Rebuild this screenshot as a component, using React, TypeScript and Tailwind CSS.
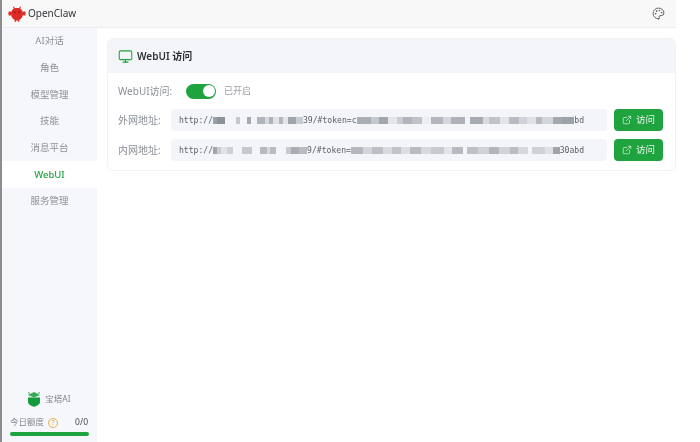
import { ExternalLink, Monitor, Palette } from 'lucide-react';

const menu = ['AI对话', '角色', '模型管理', '技能', '消息平台', 'WebUI', '服务管理'];

// pixelated parts of the addresses: [width, colour]
const mosaicA: [number, string][] = [
  [3, '#9aa0a8'], [6, '#8c929a'], [8, '#f3f5f9'], [3, '#c4c8ce'], [5, '#f3f5f9'], [3, '#a5a9b0'], [5, '#f3f5f9'], [6, '#b0b4bb'],
  [3, '#d5d8dd'], [3, '#aeb2b8'], [4, '#dfe2e6'], [3, '#b4b8be'], [4, '#e4e6ea'], [6, '#a0a4ab'], [5, '#c8cbd1'],
];
const mosaicB: [number, string][] = [
  [10, '#a9adb4'], [5, '#c5c8ce'], [6, '#a2a6ad'], [6, '#e3e5e9'], [4, '#c9ccd2'], [6, '#b1b5bb'], [7, '#bfc2c8'], [6, '#eceef2'], [8, '#b3b6bd'],
  [5, '#d3d6db'], [10, '#aeb1b8'], [3, '#f3f5f9'], [9, '#a6aab1'], [4, '#d8dade'], [7, '#c0c3c9'], [6, '#e2e4e8'], [7, '#b8bbc2'], [5, '#cfd2d7'],
  [6, '#dfe1e5'], [4, '#b6b9bf'], [8, '#d2d5da'], [6, '#a4a8af'], [8, '#9da1a8'],
];
const mosaicC: [number, string][] = [
  [3, '#a0a4ab'], [3, '#c9ccd1'], [5, '#dfe2e6'], [4, '#cdd0d5'], [7, '#f3f5f9'], [8, '#c5c8cd'], [6, '#f3f5f9'], [5, '#b6b9bf'], [3, '#d6d8dd'],
  [4, '#b9bcc2'], [8, '#f3f5f9'], [4, '#c6c9ce'], [6, '#a9adb3'], [6, '#b8bbc1'],
];
const mosaicD: [number, string][] = [
  [9, '#b4b7bd'], [6, '#d2d5da'], [8, '#bcbfc5'], [7, '#d8dade'], [6, '#c0c3c9'], [7, '#dcdee2'], [8, '#b8bbc1'], [7, '#d5d8dc'], [9, '#c6c9ce'],
  [6, '#e2e4e8'], [8, '#b7bac0'], [3, '#f3f5f9'], [8, '#bdc0c6'], [8, '#cfd2d7'], [7, '#b2b5bb'], [8, '#d0d3d8'], [6, '#b9bcc2'], [7, '#d6d8dd'],
  [3, '#f3f5f9'], [9, '#ced1d6'], [6, '#dfe1e5'], [5, '#9fa3aa'],
];

const Mosaic = ({ cells, total }: { cells: [number, string][]; total: number }) => {
  const sum = cells.reduce((acc, [w]) => acc + w, 0);
  return (
    <span className="inline-flex h-[7px] blur-[0.6px]">
      {cells.map(([w, c], i) => (
        <span key={i} className="h-full" style={{ width: (w / sum) * total, backgroundColor: c }} />
      ))}
    </span>
  );
};

const Logo = () => (
  <svg width="18" height="18" viewBox="0 0 18 18">
    <path d="M5.500 1.800 L6.500 4 M12.500 1.800 L11.500 4" stroke="#d9362f" strokeWidth="1.200" />
    <ellipse cx="1.800" cy="8.500" rx="1.500" ry="2.300" fill="#d9302a" />
    <ellipse cx="16.200" cy="8.500" rx="1.500" ry="2.300" fill="#d9302a" />
    <path d="M9 3c4 0 6 2.500 6 5.700s-2 5.300-3.600 6.100V16.800h-1.500v-1.400H8.100v1.400H6.600v-2C5 14 3 12 3 8.700S5 3 9 3z" fill="#dc2b26" />
    <circle cx="6.800" cy="7.200" r="0.800" fill="#7a1414" />
    <circle cx="11.200" cy="7.200" r="0.800" fill="#7a1414" />
  </svg>
);

const Shield = () => (
  <svg width="14" height="16" viewBox="0 0 14 16">
    <path d="M1 6.500h12v4.500c0 2.300-3 4-6 4.800-3-0.800-6-2.500-6-4.800z" fill="#159a3c" />
    <path d="M7 1l6 3-6 2.600L1 4z" fill="#35ab55" />
    <path d="M1 1.500l2 1M13 1.500l-2 1" stroke="#35ab55" strokeWidth="1" />
  </svg>
);

const AddressRow = ({ label, first, firstTotal, last, lastTotal, middle, tail }: { label: string; first: [number, string][]; firstTotal: number; last: [number, string][]; lastTotal: number; middle: string; tail: string }) => (
  <div className="flex items-center h-[22px]">
    <span className="w-[53px] text-[10px] text-[#8a8f96]">{label}</span>
    <div className="w-[436px] h-[22px] rounded bg-[#f3f5f9] pl-2 flex items-center font-['DejaVu_Sans_Mono',monospace] text-[8.100px] text-[#5d6167] whitespace-nowrap overflow-hidden">
      <span>http://</span>
      <Mosaic cells={first} total={firstTotal} />
      <span>{middle}</span>
      <Mosaic cells={last} total={lastTotal} />
      <span>{tail}</span>
    </div>
    <button className="ml-[7px] w-[49px] h-[22px] rounded bg-[#1fa33f] text-[#e9f7ec] text-[9.500px] flex items-center justify-center gap-[4px]">
      <ExternalLink size={10} strokeWidth={1.600} />
      访问
    </button>
  </div>
);

export default function App() {
  return (
    <div className="w-[700px] h-[442px] bg-white overflow-hidden blur-[0.3px] font-['Noto_Sans','Noto_Sans_CJK_SC',sans-serif]">
      <div className="w-[676px] h-full flex flex-col border-l-2 border-[#8d8d8d]">
        {/* Header */}
        <header className="h-[28px] shrink-0 bg-[#f8f8f8] border-b border-[#eeeeee] flex items-center justify-between pl-[6px] pr-[10px]">
          <div className="flex items-center gap-[2px]">
            <Logo />
            <span className="text-[10px] text-[#33363a]">OpenClaw</span>
          </div>
          <Palette size={13} strokeWidth={1.500} className="text-[#444] mr-[1px]" />
        </header>

        <div className="flex-1 flex min-h-0">
          {/* Sidebar */}
          <aside className="w-[95px] shrink-0 bg-[#f5f7fb] flex flex-col">
            <nav className="flex flex-col">
              {menu.map((item) => (
                <div
                  key={item}
                  className={
                    item === 'WebUI'
                      ? 'h-[26.700px] flex items-center justify-center text-[9.500px] text-[#1fa33f] font-medium bg-white'
                      : 'h-[26.700px] flex items-center justify-center text-[9.500px] text-[#8c9096]'
                  }
                >
                  {item}
                </div>
              ))}
            </nav>
            <div className="mt-auto px-[8px] pb-[6px]">
              <div className="flex items-center justify-center gap-[4px] mb-[9px] pr-[1px]">
                <Shield />
                <span className="text-[8.500px] text-[#83878d]">宝塔AI</span>
              </div>
              <div className="flex items-center justify-between text-[8.500px] text-[#83878d] mb-[3px] pr-[1px]">
                <span className="flex items-center gap-[4px]">
                  今日额度
                  <span className="w-[10px] h-[10px] rounded-full border border-[#e9b04a] text-[#e9a93a] text-[7px] leading-none flex items-center justify-center">?</span>
                </span>
                <span className="text-[#4a4d52]">0/0</span>
              </div>
              <div className="h-[4px] rounded-full bg-[#1fa33f] w-[79px]" />
            </div>
          </aside>

          {/* Main */}
          <main className="flex-1 min-w-0 pt-[10px] pl-[10px]">
            <section className="w-[569px] rounded-md border border-[#f1f2f4] bg-white overflow-hidden">
              <div className="h-[34px] bg-[#f3f5f9] flex items-center pl-[10px] gap-[4px]">
                <Monitor size={15} strokeWidth={1.700} className="text-[#1fa33f]" />
                <span className="text-[10px] font-semibold text-[#2d3034]">WebUI 访问</span>
              </div>
              <div className="pl-[10px] pt-[8px] pb-[9px] flex flex-col">
                <div className="flex items-center h-[20px] mb-[8px]">
                  <span className="w-[68px] text-[10px] text-[#8a8f96]">WebUI访问:</span>
                  <span className="w-[30px] h-[15px] rounded-full bg-[#1fa33f] flex items-center justify-end pr-[1.500px]">
                    <span className="w-[12px] h-[12px] rounded-full bg-white" />
                  </span>
                  <span className="ml-[8px] text-[9px] text-[#9a9ea4]">已开启</span>
                </div>
                <div className="flex flex-col gap-[8px]">
                  <AddressRow label="外网地址:" first={mosaicA} firstTotal={90} middle="39/#token=c" last={mosaicB} lastTotal={218} tail="bd" />
                  <AddressRow label="内网地址:" first={mosaicC} firstTotal={94} middle="9/#token=" last={mosaicD} lastTotal={209} tail="30abd" />
                </div>
              </div>
            </section>
          </main>
        </div>
      </div>
    </div>
  );
}
